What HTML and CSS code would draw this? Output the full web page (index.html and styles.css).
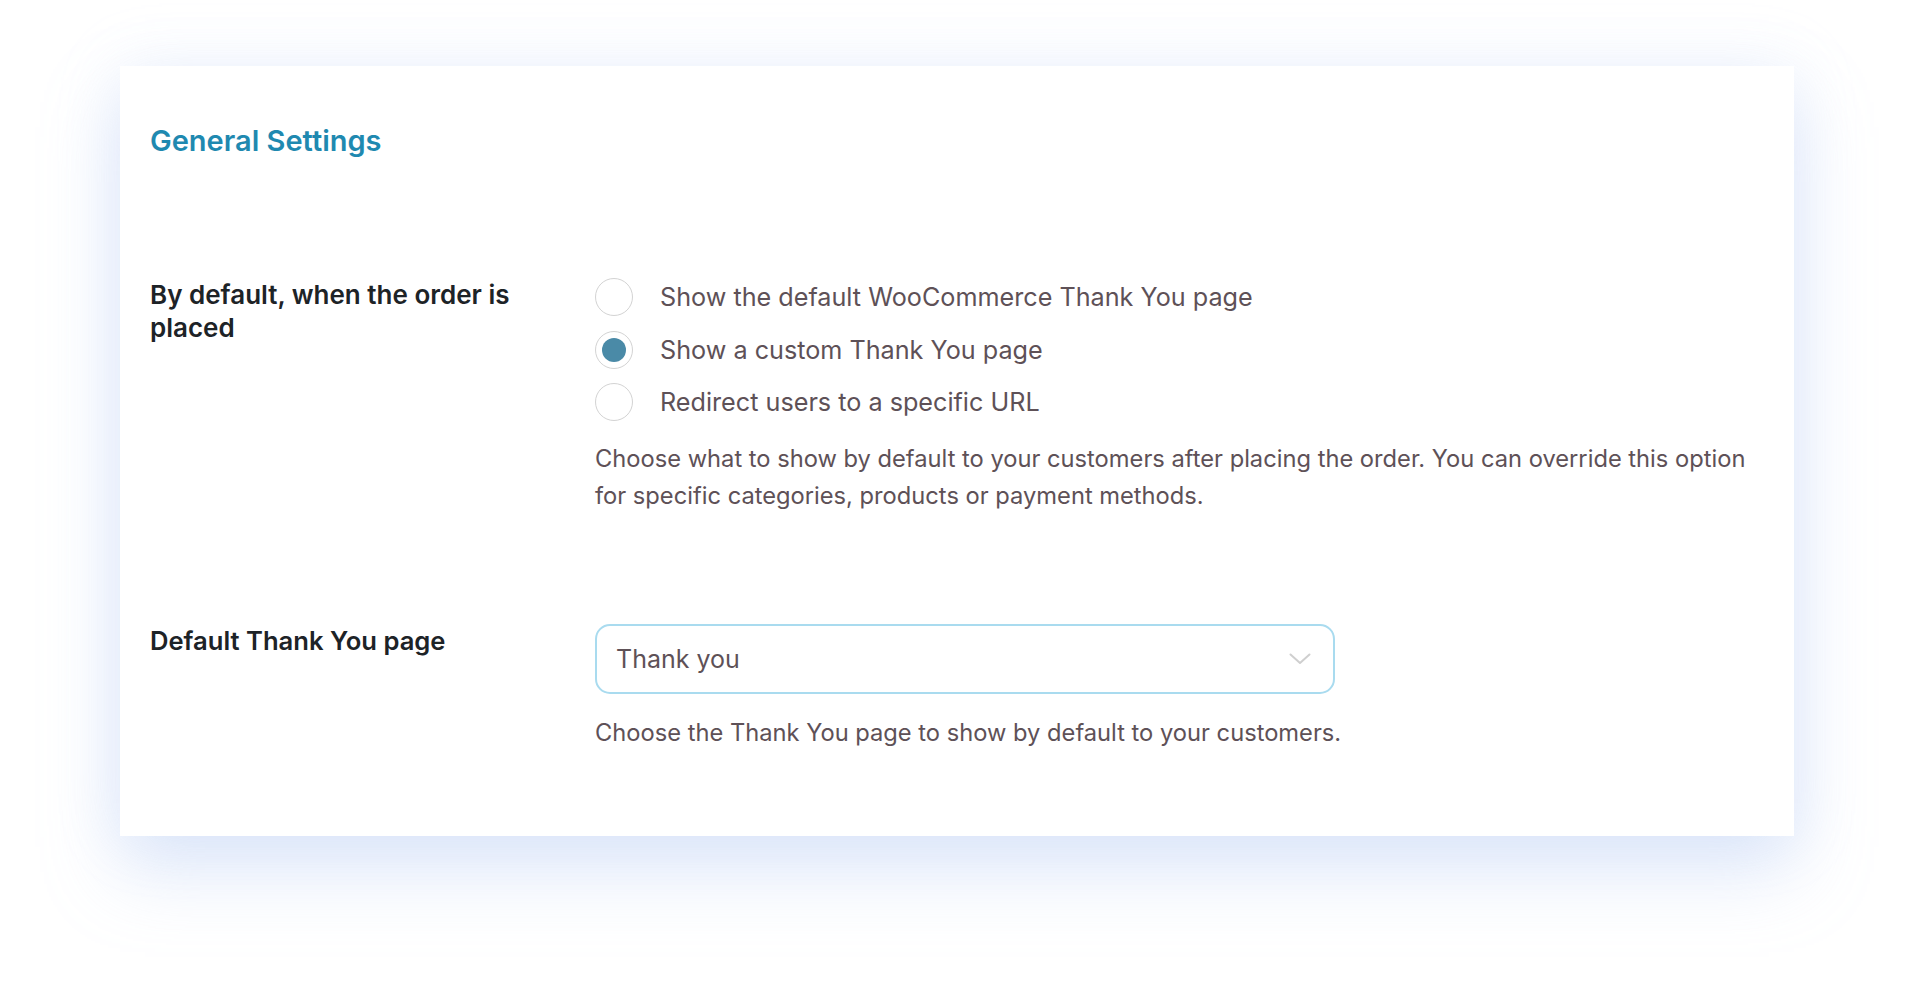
FILE: index.html
```html
<!DOCTYPE html>
<html lang="en">

<head>
  <meta charset="UTF-8">
  <meta name="viewport" content="width=device-width, initial-scale=1.0">
  <title>General Settings</title>
  <link rel="stylesheet" href="styles.css">
</head>

<body>

  <div class="card">
    <h2 class="card-title">General Settings</h2>

    <div class="field">
      <div class="field-label">By default, when the order is placed</div>
      <div class="field-body">
        <ul class="choices">
          <li><span class="radio"></span>Show the default WooCommerce Thank You page</li>
          <li><span class="radio checked"></span>Show a custom Thank You page</li>
          <li><span class="radio"></span>Redirect users to a specific URL</li>
        </ul>
        <p class="hint">Choose what to show by default to your customers after placing the order. You can override this option for specific categories, products or payment methods.</p>
      </div>
    </div>

    <div class="field">
      <div class="field-label">Default Thank You page</div>
      <div class="field-body">
        <div class="select">
          <span>Thank you</span>
          <svg class="select-arrow" width="22" height="12" viewBox="0 0 22 12">
            <path d="M1.5 1.5 L11 10 L20.5 1.5" fill="none" stroke="#cfcfcf" stroke-width="2" stroke-linecap="round" stroke-linejoin="round" />
          </svg>
        </div>
        <p class="hint">Choose the Thank You page to show by default to your customers.</p>
      </div>
    </div>
  </div>

</body>

</html>
```

FILE: styles.css
```css
* {
  margin: 0;
  padding: 0;
  list-style: none;
  box-sizing: border-box;
}

html {
  background: #fff;
}

body {
  min-height: 1007px;
  font-family: Inter, "Noto Sans", sans-serif;
  padding: 66px 117px 160px 120px;
}

.card {
  background: #fff;
  padding: 57px 30px 85px;
  box-shadow: 0 36px 70px rgba(170, 195, 240, .36), 0 0 60px rgba(185, 205, 245, .2);
}

.card-title {
  font-size: 29px;
  line-height: 36px;
  font-weight: 600;
  color: #1f89b0;
  margin-bottom: 119px;
}

.field {
  display: flex;
}

.field + .field {
  margin-top: 110px;
}

.field-label {
  width: 445px;
  padding-right: 40px;
  font-size: 26px;
  line-height: 33px;
  font-weight: 600;
  color: #1d2327;
}

.field + .field .field-label {
  font-size: 25.6px;
}

.field-body {
  flex: 1;
  color: #5e5157;
}

.choices li {
  display: flex;
  align-items: center;
  gap: 27px;
  font-size: 25.2px;
  height: 38px;
}

.choices li + li {
  margin-top: 14.5px;
}

.radio {
  width: 38px;
  height: 38px;
  border: 1.5px solid #d3d3d3;
  border-radius: 50%;
  display: flex;
  align-items: center;
  justify-content: center;
  flex-shrink: 0;
}

.radio.checked::after {
  content: '';
  width: 24px;
  height: 24px;
  border-radius: 50%;
  background: #4a8aa7;
}

.hint {
  margin-top: 19px;
  font-size: 23.7px;
  line-height: 37px;
}

.select {
  width: 740px;
  height: 70px;
  border: 2px solid #a9dbef;
  border-radius: 15px;
  padding: 0 22px 0 19px;
  display: flex;
  align-items: center;
  justify-content: space-between;
  font-size: 25px;
}

.select + .hint {
  margin-top: 20px;
}
```
